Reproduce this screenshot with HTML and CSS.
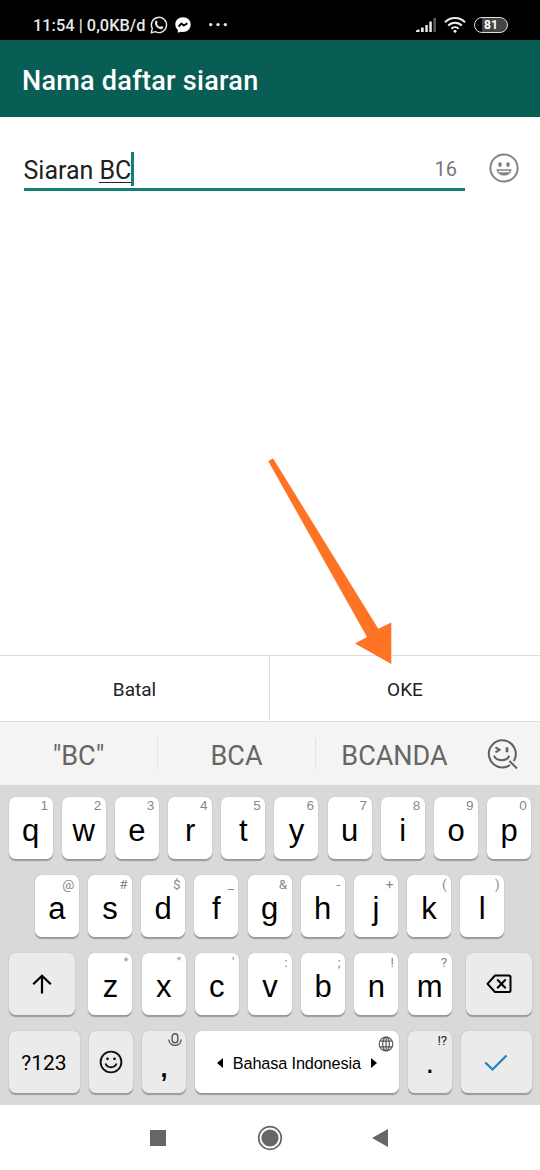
FILE: index.html
```html
<!DOCTYPE html>
<html lang="id">
<head>
<meta charset="utf-8">
<title>Nama daftar siaran</title>
<link rel="stylesheet" href="styles.css">
</head>
<body>
<div class="screen">
  <div class="status">
    <span class="clock">11:54 | 0,0KB/d</span>
    <svg class="ic-wa" width="18" height="18" viewBox="0 0 18 18"><path d="M1.2 16.8l1.1-4.2a7.6 7.6 0 1 1 3 3z" fill="none" stroke="#e8e8e8" stroke-width="1.4" stroke-linejoin="round"/><path d="M5.3 5.2c.6-.8 1.4-.9 1.7-.2l.6 1.5c.2.5-.7 1-.6 1.4.6 1.3 1.600 2.300 3 3 .5.1 1-1 1.500-.8l1.500.7c.6.4.3 1.200-.3 1.800-1.200 1-2.700.6-4.300-.3C6.300 11.100 4.100 8 5.300 5.200z" fill="#e8e8e8"/></svg>
    <svg class="ic-ms" width="16" height="16" viewBox="0 0 16 16"><path d="M8 .3C3.500.3.300 3.400.300 7.500c0 2.200 1 4 2.500 5.300l.1 2.200c0 .5.500.8.900.6l1.800-.9c.8.2 1.600.3 2.400.3 4.500 0 7.700-3.200 7.700-7.500S12.500.3 8 .3z" fill="#fff"/><path d="M3.600 9.700l2.700-3.200 2.600 2 3.500-2.200" fill="none" stroke="#000" stroke-width="1.900" stroke-linejoin="round"/></svg>
    <svg class="ic-dots" width="18" height="4" viewBox="0 0 18 4" fill="#e8e8e8"><circle cx="1.700" cy="1.600" r="1.700"/><circle cx="9" cy="1.600" r="1.700"/><circle cx="16.300" cy="1.600" r="1.700"/></svg>
    <svg class="ic-signal" width="20" height="16" viewBox="0 0 20 16"><path d="M0 15v-1.500l3.500-1.500v3zM5 10.500h2.700V15H5zM9.300 8h2.500v7H9.300zM13.300 4.500h2.500V15h-2.500z" fill="#e8e8e8"/><path d="M17.300 1H20v14h-2.700z" fill="#555"/></svg>
    <svg class="ic-wifi" width="22" height="16" viewBox="0 0 22 16" fill="none" stroke="#eee" stroke-width="2"><path d="M1 5.200a14.200 14.200 0 0 1 20 0M4.200 8.600a9.600 9.600 0 0 1 13.600 0M7.400 11.800a5.100 5.100 0 0 1 7.200 0"/><circle cx="11" cy="14.200" r="1.500" fill="#eee" stroke="none"/></svg>
    <span class="battery">81</span>
  </div>
  <header class="appbar">Nama daftar siaran</header>
  <main class="content">
    <div class="field"><span class="value">Siaran <span class="composing">BC</span></span><span class="caret"></span><span class="count">16</span></div>
    <svg class="emoji" width="30" height="30" viewBox="0 0 30 30"><circle cx="15" cy="15" r="13.600" fill="none" stroke="#808587" stroke-width="2"/><ellipse cx="11" cy="11.500" rx="1.800" ry="2.500" fill="#808587"/><ellipse cx="19" cy="11.500" rx="1.800" ry="2.500" fill="#808587"/><path d="M7.400 16.300h15.200c-.6 4-3.800 6.300-7.600 6.300s-7-2.300-7.600-6.300z" fill="#808587"/><path d="M9.200 17.700h11.600l-.8 1.500H10z" fill="#fff"/></svg>
  </main>
  <div class="actions"><div class="action">Batal</div><div class="action">OKE</div></div>
  <svg class="arrow" width="126" height="208" viewBox="0 0 126 208"><path d="M3.300 3.200L8 .3l105.300 170.500 13-6.300V206L90 185.500l12-6.500z" fill="#ff7324"/></svg>
  <div class="suggest">
    <span>"BC"</span><i></i><span>BCA</span><i></i><span>BCANDA</span>
    <svg class="find" width="32" height="32" viewBox="0 0 32 32" fill="none" stroke="#606060" stroke-width="2"><path d="M23 26A13.500 13.500 0 1 1 26.800 22M22.500 22l7.500 7.500"/><path d="M8.500 8.300l4 2.500-4 2.500"/><path d="M20 8.300v5" stroke-width="2.600"/><path d="M7 16.700c2.200 6 13 6 15.200 0"/></svg>
  </div>
  <div class="keyboard">
    <div class="row">
      <div class="key">q<sup>1</sup></div><div class="key">w<sup>2</sup></div><div class="key">e<sup>3</sup></div><div class="key">r<sup>4</sup></div><div class="key">t<sup>5</sup></div><div class="key">y<sup>6</sup></div><div class="key">u<sup>7</sup></div><div class="key">i<sup>8</sup></div><div class="key">o<sup>9</sup></div><div class="key">p<sup>0</sup></div>
    </div>
    <div class="row mid">
      <div class="key">a<sup class="sym">@</sup></div><div class="key">s<sup class="sym">#</sup></div><div class="key">d<sup class="sym">$</sup></div><div class="key">f<sup class="sym">_</sup></div><div class="key">g<sup class="sym">&amp;</sup></div><div class="key">h<sup class="sym">-</sup></div><div class="key">j<sup class="sym">+</sup></div><div class="key">k<sup class="sym">(</sup></div><div class="key">l<sup class="sym">)</sup></div>
    </div>
    <div class="row low">
      <div class="key fn shift"><svg width="20" height="20" viewBox="0 0 20 20" fill="none" stroke="#000" stroke-width="2.200"><path d="M10 19.500V2M1.200 10.300L10 1.700l8.800 8.600"/></svg></div>
      <div class="letters"><div class="key">z<sup class="sym star">*</sup></div><div class="key">x<sup class="sym">"</sup></div><div class="key">c<sup class="sym">'</sup></div><div class="key">v<sup class="sym">:</sup></div><div class="key">b<sup class="sym">;</sup></div><div class="key">n<sup class="sym">!</sup></div><div class="key">m<sup class="sym">?</sup></div></div>
      <div class="key fn del"><svg width="26" height="20" viewBox="0 0 26 20" fill="none" stroke="#000" stroke-width="2"><path d="M9 1.500h14q1.500 0 1.500 1.500v13.500q0 1.500-1.500 1.500H9L1.500 9.800z" stroke-linejoin="round"/><path d="M11.200 5.500l8.500 8.700M19.700 5.500l-8.500 8.700"/></svg></div>
    </div>
    <div class="row">
      <div class="key fn num">?123</div>
      <div class="key fn"><svg width="24" height="24" viewBox="0 0 24 24" fill="none" stroke="#111" stroke-width="1.900"><circle cx="12" cy="12" r="10.400"/><path d="M6.500 13.500c1.700 5 9.300 5 11 0"/><circle cx="8.500" cy="8.800" r="1.400" fill="#111" stroke="none"/><circle cx="15.500" cy="8.800" r="1.400" fill="#111" stroke="none"/></svg></div>
      <div class="key fn comma">,<svg class="mic" width="14" height="14" viewBox="0 0 14 14" fill="none" stroke="#555" stroke-width="1.400"><rect x="4.200" y=".7" width="5.600" height="9" rx="2.800"/><path d="M.8 6.500c.5 7.800 11.900 7.800 12.400 0"/></svg></div>
      <div class="key space"><svg width="6" height="10" viewBox="0 0 6 10"><path d="M6 0v10L0 5z"/></svg><span>Bahasa Indonesia</span><svg width="6" height="10" viewBox="0 0 6 10"><path d="M0 0v10l6-5z"/></svg><svg class="globe" width="16" height="16" viewBox="0 0 16 16" fill="none" stroke="#555" stroke-width="1.200"><circle cx="8" cy="8" r="6.800"/><ellipse cx="8" cy="8" rx="3.300" ry="6.800"/><path d="M8 1v14M2.200 5.200h11.600M2.200 10.800h11.600"/></svg></div>
      <div class="key fn dot">.<sup class="sym">!?</sup></div>
      <div class="key fn num"><svg width="24" height="18" viewBox="0 0 24 18"><path d="M1.300 8.500l7.200 7L22.500 1.500" fill="none" stroke="#2186bd" stroke-width="2.300"/></svg></div>
    </div>
  </div>
  <nav class="nav">
    <svg width="16" height="16" viewBox="0 0 16 16"><path d="M0 0h16v16H0z" fill="#666"/></svg>
    <svg width="26" height="26" viewBox="0 0 26 26"><circle cx="13" cy="13" r="11.300" fill="none" stroke="#666" stroke-width="1.700"/><circle cx="13" cy="13" r="8.600" fill="#666"/></svg>
    <svg width="16" height="18" viewBox="0 0 16 18"><path d="M16 0v18L0 9z" fill="#666"/></svg>
  </nav>
</div>
</body>
</html>
```

FILE: styles.css
```css
* { box-sizing: border-box; }
body { margin: 0; background: #fff; font-family: Roboto, sans-serif; }
svg { display: block; flex: none; overflow: visible; }
.screen { position: relative; width: 540px; height: 1170px; display: flex; flex-direction: column; overflow: hidden; }
.status { height: 40px; background: #000; display: flex; align-items: center; padding: 9px 32px 0 33px; color: #e8e8e8; }
.clock { width: 117px; font-size: 16.3px; font-weight: 500; letter-spacing: .05px; white-space: nowrap; line-height: 20px; padding-top: 2px; }
.ic-ms { margin-left: 7px; }
.ic-dots { margin-left: 18px; }
.ic-signal { margin-left: auto; }
.ic-wifi { margin-left: 8px; }
.battery { width: 34px; height: 16px; margin-left: 8px; border: 1.5px solid #ddd; border-radius: 8px; background: linear-gradient(90deg, #000 7px, #454545 7px); font-size: 12px; font-weight: 700; line-height: 14.5px; text-align: center; color: #fff; }
.appbar { height: 77px; background: #085e55; color: #fff; font-size: 27px; font-weight: 500; letter-spacing: .27px; line-height: 82px; padding-left: 22px; white-space: nowrap; }
.content { height: 538px; padding: 34px 21px 0 23.5px; display: flex; align-items: flex-start; justify-content: space-between; }
.field { width: 441.5px; height: 40px; border-bottom: 3px solid #128073; display: flex; align-items: flex-start; color: #212121; }
.value { font-size: 25px; letter-spacing: -.02px; line-height: 40px; white-space: nowrap; }
.composing { background: linear-gradient(#222, #222) left 0 bottom 2px / 100% 1.3px no-repeat; }
.caret { width: 3px; height: 34px; margin-top: 1px; background: #128073; }
.count { margin-left: auto; padding-right: 8px; font-size: 20px; line-height: 36px; color: #777; }
.emoji { margin-top: 2px; }
.actions { height: 67px; display: grid; grid-template-columns: 269px 271px; border-top: 1.5px solid #dedede; border-bottom: 1px solid #ddd; }
.action { font-size: 19px; line-height: 67px; text-align: center; color: #222; }
.action + .action { border-left: 1px solid #ddd; }
.arrow { position: absolute; left: 265px; top: 458px; }
.suggest { height: 63px; background: #f4f4f4; display: flex; align-items: center; font-size: 27px; color: #666; white-space: nowrap; padding-top: 4px; }
.suggest span { width: 157px; text-align: center; }
.suggest i { width: 1px; height: 31px; background: #e2e2e2; margin-top: -5px; }
.suggest .find { margin: -1px 0 0 14px; }
.keyboard { height: 320px; background: #d9d9d9; padding: 11.5px 8.5px 0; display: flex; flex-direction: column; gap: 15px; }
.row { height: 63px; display: flex; gap: 9.2px; }
.mid { padding-left: 26.3px; }
.low { justify-content: space-between; }
.letters { display: flex; gap: 9.2px; }
.key { position: relative; flex: none; width: 44px; height: 62.5px; border-radius: 6.5px; background: #fff; box-shadow: 0 1.3px 1px #999, 0 0 1px #aaa; display: flex; align-items: center; justify-content: center; font: 31px/60px "Liberation Sans", sans-serif; color: #000; padding-top: 7px; }
.key sup { position: absolute; right: 4.5px; top: 1px; font: 13.5px/16px "Liberation Sans", sans-serif; color: #888; }
.key .sym { font-family: Roboto, sans-serif; }
.key .star { font-size: 10px; }
.fn { background: #ebebeb; padding-top: 1px; }
.shift, .del { width: 66px; }
.num { width: 71px; font: 21px/62px Roboto, sans-serif; padding-top: 2px; }
.comma { padding-top: 12px; font-weight: 700; font-size: 25px; }
.dot { padding-top: 3px; }
.dot .sym { color: #222; }
.mic { position: absolute; right: 4px; top: 2px; }
.space { width: 203.5px; gap: 10px; font-size: 16.3px; padding-top: 3px; white-space: nowrap; }
.space span { letter-spacing: -.15px; }
.globe { position: absolute; right: 5px; top: 5px; }
.nav { flex: 1; display: flex; align-items: center; justify-content: space-between; padding: 0 152px 0 150px; }
.nav svg:nth-child(2) { margin-left: 2px; }
```
